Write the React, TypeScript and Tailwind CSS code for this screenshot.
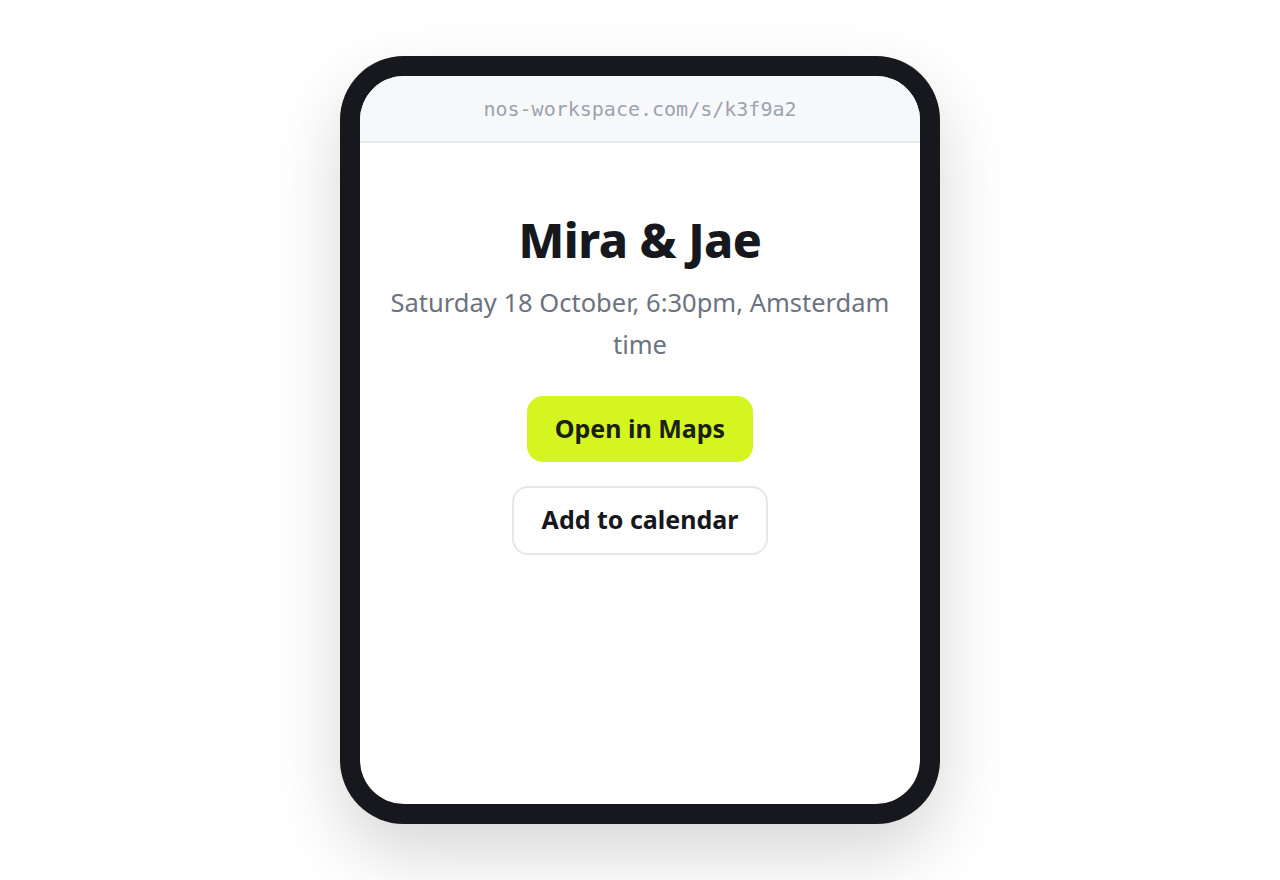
import React from "react";

export default function App() {
  return (
    <div className="w-full h-[880px] bg-white flex items-start justify-center pt-[56px] font-['Noto_Sans',sans-serif]">
      <div className="w-[600px] h-[768px] rounded-[64px] bg-[#16181d] p-[20px] shadow-[0_30px_70px_rgba(0,0,0,0.16)]">
        <div className="w-full h-full rounded-[44px] bg-white overflow-hidden flex flex-col">
          <div className="h-[67px] bg-[#f7f8fa] border-b-2 border-[#e5e7eb] flex items-center justify-center">
            <span className="font-['DejaVu_Sans_Mono',monospace] text-[20px] text-[#9ca3af]">
              nos-workspace.com/s/k3f9a2
            </span>
          </div>
          <div className="flex flex-col items-center px-6 pt-[68px] text-center">
            <h1 className="text-[48px] leading-[1.2] font-extrabold tracking-[-0.01em] text-[#16181d]">
              Mira &amp; Jae
            </h1>
            <p className="mt-[12px] text-[25.5px] leading-[42px] text-[#6b7280]">
              Saturday 18 October, 6:30pm, Amsterdam time
            </p>
            <button className="mt-[31px] h-[66px] px-7 rounded-[16px] bg-[#d4f520] text-[25px] font-bold text-[#1a1f12]">
              Open in Maps
            </button>
            <button className="mt-[24px] h-[69px] px-7 rounded-[16px] bg-white border-2 border-[#e5e7eb] text-[25px] font-bold text-[#16181d]">
              Add to calendar
            </button>
          </div>
        </div>
      </div>
    </div>
  );
}
